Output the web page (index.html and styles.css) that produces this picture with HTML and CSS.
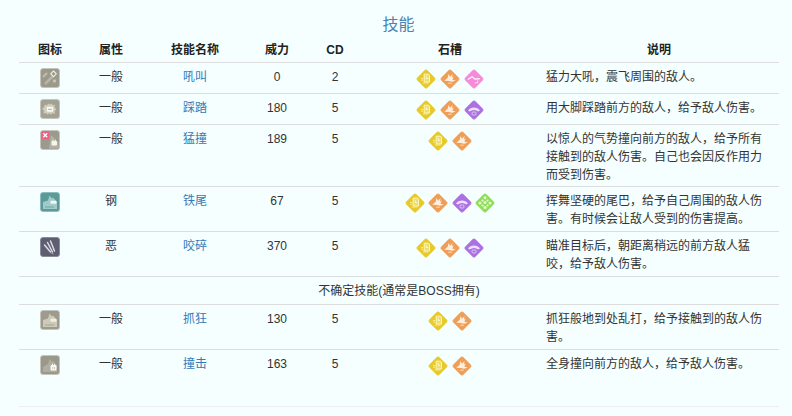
FILE: index.html
```html
<!DOCTYPE html>
<html lang="zh">
<head>
<meta charset="utf-8">
<title>技能</title>
<link rel="stylesheet" href="styles.css">
</head>
<body>
<svg class="defs" width="0" height="0" aria-hidden="true">
  <symbol id="d-yellow" viewBox="0 0 20 20">
    <rect x="3" y="3" width="14" height="14" rx="1.800" transform="rotate(45 10 10)" fill="#e7ca2a" stroke="#e9d040" stroke-width=".6"/>
    <path d="M8.200 5.200h4.300l1 1v6.800H8.200z" fill="#f0dc68" stroke="#fdf6c0" stroke-width="1"/>
    <path d="M10.300 7.200v2.400h1.900" fill="none" stroke="#fffbe0" stroke-width=".9"/>
    <path d="M5 9.500h2.200M5 11.200h2.200M6.800 14h5.500" stroke="#f8eda0" stroke-width=".9"/>
  </symbol>
  <symbol id="d-orange" viewBox="0 0 20 20">
    <rect x="3" y="3" width="14" height="14" rx="1.800" transform="rotate(45 10 10)" fill="#ee9e57" stroke="#f2ab6e" stroke-width=".6"/>
    <path d="M4.300 11.800l3.400-3 .8-3.800 1.600 2.800 2.400-2.800-.5 3.400 1.800-.9-1.400 2.900 3.300 1.400-3.800 .9-3-.8z" fill="#fdeedd"/>
    <path d="M8.200 14.200h3.600" stroke="#fbdcbd" stroke-width="1"/>
  </symbol>
  <symbol id="d-pink" viewBox="0 0 20 20">
    <rect x="3" y="3" width="14" height="14" rx="1.800" transform="rotate(45 10 10)" fill="#f68ad8" stroke="#f89de0" stroke-width=".6"/>
    <path d="M3.800 10.500l4.300-2.800 3 2.400 4.800-.5" fill="none" stroke="#fff" stroke-width="1.100"/>
    <path d="M10.700 13.800h3v-2.600" fill="none" stroke="#fcd8f2" stroke-width="1"/>
  </symbol>
  <symbol id="d-purple" viewBox="0 0 20 20">
    <rect x="3" y="3" width="14" height="14" rx="1.800" transform="rotate(45 10 10)" fill="#ab70e2" stroke="#b580e6" stroke-width=".6"/>
    <path d="M4 10.500a7 6 0 0 1 12 0l-1.900 1.100a5 4 0 0 0-8.200 0z" fill="#eee0fc"/>
    <rect x="8" y="12" width="4" height="3" rx="1" fill="none" stroke="#e0cdf8" stroke-width=".9"/>
  </symbol>
  <symbol id="d-green" viewBox="0 0 20 20">
    <rect x="3" y="3" width="14" height="14" rx="1.800" transform="rotate(45 10 10)" fill="#8fdd58" stroke="#9ce26a" stroke-width=".6"/>
    <g fill="#e4fbd0">
      <circle cx="10" cy="4.800" r="1.500"/><circle cx="5" cy="10" r="1.500"/><circle cx="15" cy="10" r="1.500"/>
      <circle cx="7.500" cy="7.500" r="1.100"/><circle cx="12.500" cy="7.500" r="1.100"/>
      <circle cx="10" cy="9.500" r="1.500"/><circle cx="10" cy="14.500" r="1.600"/><circle cx="7.500" cy="12.500" r="1.100"/><circle cx="12.500" cy="12.500" r="1.100"/>
    </g>
  </symbol>
  <symbol id="i-howl" viewBox="0 0 20 20">
    <rect x=".5" y=".5" width="19" height="19" rx="2.500" fill="#9b998a" stroke="#c6c5bc"/>
    <path d="M3 9l4-4" stroke="#bdbcae" stroke-width="2.200"/>
    <path d="M5 16l8-8" stroke="#b5b4a5" stroke-width="2.600"/>
    <path d="M13.500 3l2.800 2.800-2.800 2.800-2.800-2.800z" fill="none" stroke="#ecece4" stroke-width="1.100"/>
    <circle cx="14.500" cy="13" r="1.700" fill="#c4c3b6"/>
  </symbol>
  <symbol id="i-stomp" viewBox="0 0 20 20">
    <rect x=".5" y=".5" width="19" height="19" rx="2.500" fill="#a3a193" stroke="#c6c5bc"/>
    <path d="M5 5.500l2 1 1.200-2 1.800 1 1.800-1 1.200 2 2-1-.5 3 2 2-2 1.500 .5 3-2.500-1-1.500 1.500-2-1-2 1-1-1.500-2.500 .5 .5-3-2-1.500 2-2z" fill="#cfcdbd"/>
    <rect x="6.800" y="7.800" width="6.400" height="5" rx="1" fill="#f8f8f2"/>
    <path d="M8 10.300h4" stroke="#a3a193" stroke-width=".8"/>
  </symbol>
  <symbol id="i-ram" viewBox="0 0 20 20">
    <rect x=".5" y=".5" width="19" height="19" rx="2.500" fill="#9c9a8d" stroke="#c6c5bc"/>
    <path d="M11 5l7.500 7.500v6H9z" fill="#b3b1a4"/>
    <rect x="1.500" y="1.500" width="7.500" height="7.500" rx="1" fill="#ee5f83"/>
    <path d="M3.300 3.300l3.900 3.900M7.200 3.300l-3.900 3.900" stroke="#fff" stroke-width="1.300"/>
    <rect x="11.500" y="11" width="5.500" height="4.500" rx="1" fill="#f6f6f0"/>
    <path d="M13 11V9.800M15.500 11V9.800" stroke="#f6f6f0"/>
  </symbol>
  <symbol id="i-tail" viewBox="0 0 20 20">
    <rect x=".5" y=".5" width="19" height="19" rx="2.500" fill="#5c9a9a" stroke="#8dbcbc"/>
    <path d="M3 10l5-1.500 1.500-5 2.500 3 1-1 4 4.500v7H3z" fill="#a2cbc8"/>
    <path d="M5 15h9" stroke="#6fa8a6" stroke-width="1"/>
    <rect x="10.500" y="8.800" width="6" height="3" rx=".8" fill="#eef8f8"/>
  </symbol>
  <symbol id="i-bite" viewBox="0 0 20 20">
    <rect x=".5" y=".5" width="19" height="19" rx="2.500" fill="#5f5d72" stroke="#8b8a99"/>
    <path d="M4.500 8l6 7M7.500 5.500l5 9.500M10.500 4l4 10" stroke="#dcdce4" stroke-width="1.500" stroke-linecap="round"/>
    <path d="M11 16l2.500 1" stroke="#a5a4b1" stroke-width="1"/>
  </symbol>
  <symbol id="i-claw" viewBox="0 0 20 20">
    <rect x=".5" y=".5" width="19" height="19" rx="2.500" fill="#9d9b8c" stroke="#c6c5bc"/>
    <path d="M3 10l5-1.500 1.500-5 2.500 3 1-1 4 4.500v7H3z" fill="#cdcaba"/>
    <path d="M5 15h9" stroke="#a6a494" stroke-width="1"/>
    <rect x="10.500" y="8.800" width="6" height="3" rx=".8" fill="#f0efe6"/>
  </symbol>
  <symbol id="i-hit" viewBox="0 0 20 20">
    <rect x=".5" y=".5" width="19" height="19" rx="2.500" fill="#9a988b" stroke="#c6c5bc"/>
    <path d="M3 12l5-3 1.500-5 2.500 3 1-1 4 4.500v6.500H3z" fill="#b0aea0"/>
    <rect x="10.500" y="10" width="6" height="5.500" rx="1" fill="#f8f8f2"/>
    <path d="M12.500 10V8.800M14.500 10V8.800" stroke="#f8f8f2"/>
    <path d="M12.300 13h.9M14 13h.9" stroke="#9a988b" stroke-width="1"/>
  </symbol>
</svg>

<main class="page">
  <h2 class="title">技能</h2>
  <table class="skills">
    <colgroup>
      <col class="c-icon"><col class="c-attr"><col class="c-name"><col class="c-power"><col class="c-cd"><col class="c-slots"><col class="c-desc">
    </colgroup>
    <thead>
      <tr><th>图标</th><th>属性</th><th>技能名称</th><th>威力</th><th>CD</th><th>石槽</th><th class="th-desc">说明</th></tr>
    </thead>
    <tbody>
      <tr class="one">
        <td class="icell"><svg class="ico"><use href="#i-howl"/></svg></td><td>一般</td><td><a href="#">吼叫</a></td><td>0</td><td>2</td>
        <td><div class="slots"><svg class="gem"><use href="#d-yellow"/></svg><svg class="gem"><use href="#d-orange"/></svg><svg class="gem"><use href="#d-pink"/></svg></div></td>
        <td class="desc">猛力大吼，震飞周围的敌人。</td>
      </tr>
      <tr class="one">
        <td class="icell"><svg class="ico"><use href="#i-stomp"/></svg></td><td>一般</td><td><a href="#">踩踏</a></td><td>180</td><td>5</td>
        <td><div class="slots"><svg class="gem"><use href="#d-yellow"/></svg><svg class="gem"><use href="#d-orange"/></svg><svg class="gem"><use href="#d-purple"/></svg></div></td>
        <td class="desc">用大脚踩踏前方的敌人，给予敌人伤害。</td>
      </tr>
      <tr>
        <td class="icell"><svg class="ico"><use href="#i-ram"/></svg></td><td>一般</td><td><a href="#">猛撞</a></td><td>189</td><td>5</td>
        <td><div class="slots"><svg class="gem"><use href="#d-yellow"/></svg><svg class="gem"><use href="#d-orange"/></svg></div></td>
        <td class="desc">以惊人的气势撞向前方的敌人，给予所有接触到的敌人伤害。自己也会因反作用力而受到伤害。</td>
      </tr>
      <tr class="two">
        <td class="icell"><svg class="ico"><use href="#i-tail"/></svg></td><td>钢</td><td><a href="#">铁尾</a></td><td>67</td><td>5</td>
        <td><div class="slots"><svg class="gem"><use href="#d-yellow"/></svg><svg class="gem"><use href="#d-orange"/></svg><svg class="gem"><use href="#d-purple"/></svg><svg class="gem"><use href="#d-green"/></svg></div></td>
        <td class="desc">挥舞坚硬的尾巴，给予自己周围的敌人伤害。有时候会让敌人受到的伤害提高。</td>
      </tr>
      <tr class="two">
        <td class="icell"><svg class="ico"><use href="#i-bite"/></svg></td><td>恶</td><td><a href="#">咬碎</a></td><td>370</td><td>5</td>
        <td><div class="slots"><svg class="gem"><use href="#d-yellow"/></svg><svg class="gem"><use href="#d-orange"/></svg><svg class="gem"><use href="#d-purple"/></svg></div></td>
        <td class="desc">瞄准目标后，朝距离稍远的前方敌人猛咬，给予敌人伤害。</td>
      </tr>
      <tr class="note"><td colspan="7">不确定技能(通常是BOSS拥有)</td></tr>
      <tr class="two">
        <td class="icell"><svg class="ico"><use href="#i-claw"/></svg></td><td>一般</td><td><a href="#">抓狂</a></td><td>130</td><td>5</td>
        <td><div class="slots"><svg class="gem"><use href="#d-yellow"/></svg><svg class="gem"><use href="#d-orange"/></svg></div></td>
        <td class="desc">抓狂般地到处乱打，给予接触到的敌人伤害。</td>
      </tr>
      <tr class="last">
        <td class="icell"><svg class="ico"><use href="#i-hit"/></svg></td><td>一般</td><td><a href="#">撞击</a></td><td>163</td><td>5</td>
        <td><div class="slots"><svg class="gem"><use href="#d-yellow"/></svg><svg class="gem"><use href="#d-orange"/></svg></div></td>
        <td class="desc">全身撞向前方的敌人，给予敌人伤害。</td>
      </tr>
    </tbody>
  </table>
</main>
</body>
</html>
```
FILE: styles.css
```css
html, body {
  margin: 0;
  height: 416px;
  overflow: hidden;
  background: #f5ffff;
}
body {
  font-family: "Liberation Sans", "Noto Sans CJK SC", sans-serif;
  font-size: 12px;
  line-height: 18px;
  color: #333;
}
.defs { position: absolute; }
.page { padding: 0 13px 0 19px; }
.title {
  margin: 0;
  padding: 14px 1px 0 0;
  height: 25px;
  font-size: 16px;
  line-height: 22px;
  font-weight: 400;
  text-align: center;
  color: #4a84b4;
}
.skills {
  width: 760px;
  table-layout: fixed;
  border-collapse: collapse;
  border-spacing: 0;
}
.c-icon { width: 62px; }
.c-attr { width: 60px; }
.c-name { width: 108px; }
.c-power { width: 56px; }
.c-cd { width: 60px; }
.c-slots { width: 170px; }
.c-desc { width: 244px; }
th {
  padding: 2px 0 3px;
  height: 14px;
  font-weight: 700;
  text-align: center;
  color: #222;
  border-bottom: 1px solid #ddd;
}
th.th-desc { padding-left: 4px; }
td {
  padding: 5px 0 0;
  text-align: center;
  vertical-align: top;
  border-bottom: 1px solid #ddd;
}
td.icell { padding-top: 5px; }
td.desc {
  padding: 5px 15px 2px 11px;
  text-align: left;
}
.one td { height: 25px; }
.two td { height: 39px; }
.two td.desc { height: 37px; }
.one td.desc { height: 23px; }
.note td { height: 20px; padding: 5px 0 2px; }
.last td { height: 51px; border-bottom-color: #eee; }
.last td.desc { height: 49px; }
a { color: #337ab7; text-decoration: none; }
.ico { display: block; width: 20px; height: 20px; margin: 0 auto; }
.slots { display: flex; justify-content: center; gap: 3.6px; padding-top: 1px; }
.gem { display: block; width: 20px; height: 20px; flex: none; }
```
